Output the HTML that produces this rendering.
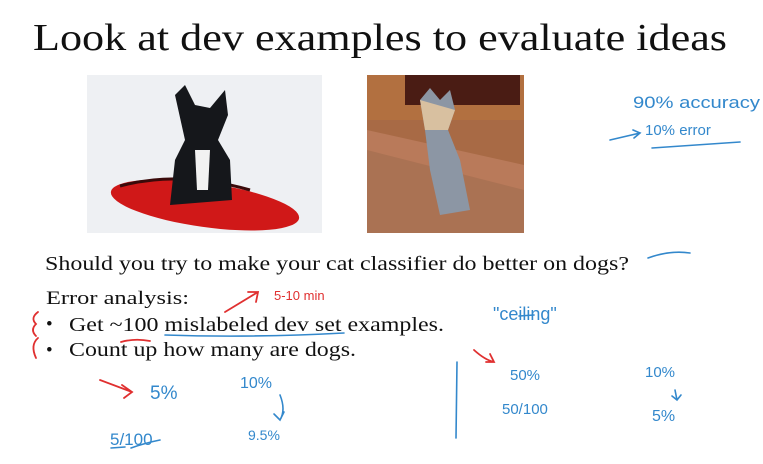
<!DOCTYPE html>
<html><head><meta charset="utf-8"><style>
html,body{margin:0;padding:0;background:#fff;width:763px;height:464px;overflow:hidden}
svg{display:block}
.s{font-family:"Liberation Serif",serif;fill:#111}
.h{font-family:"Liberation Sans",sans-serif;fill:#3388cc}
.r{font-family:"Liberation Sans",sans-serif;fill:#e03030}
</style></head><body>
<svg width="763" height="464" viewBox="0 0 763 464" xmlns="http://www.w3.org/2000/svg">
<text class="s" x="33" y="50" font-size="38" textLength="694" lengthAdjust="spacingAndGlyphs">Look at dev examples to evaluate ideas</text>
<!-- dog 1 -->
<rect x="87" y="75" width="235" height="158" fill="#eef0f3"/>
<ellipse cx="205" cy="205" rx="95" ry="22" fill="#d01818" transform="rotate(8 205 205)"/>
<path d="M120 186 Q180 170 250 190" stroke="#3a0a0a" stroke-width="3" fill="none"/>
<path d="M175 95 L185 85 L195 105 L210 108 L225 90 L228 115 L218 140 L230 160 L232 200 L170 205 L175 160 L185 140 Z" fill="#15171b"/>
<path d="M195 150 L210 150 L208 190 L197 190 Z" fill="#f2f2f2"/>
<!-- dog 2 -->
<rect x="367" y="75" width="157" height="158" fill="#a86a45"/>
<rect x="367" y="75" width="157" height="45" fill="#b27040"/>
<rect x="405" y="75" width="115" height="30" fill="#4a1c14"/>
<path d="M367 130 L524 165 L524 233 L367 233 Z" fill="#b97a5a"/>
<path d="M367 150 L524 190 L524 233 L367 233 Z" fill="#9c6a4c" opacity="0.5"/>
<path d="M420 100 L430 88 L440 100 L450 90 L455 110 L448 130 L460 160 L470 210 L440 215 L430 170 L425 130 Z" fill="#8c96a4"/>
<path d="M420 100 L455 110 L448 130 L425 130 Z" fill="#d8c0a0"/>
<text class="s" x="45" y="270" font-size="19.5" textLength="584" lengthAdjust="spacingAndGlyphs">Should you try to make your cat classifier do better on dogs?</text>
<text class="s" x="46" y="304" font-size="19" textLength="143" lengthAdjust="spacingAndGlyphs">Error analysis:</text>
<text class="s" x="46" y="330" font-size="19">•</text>
<text class="s" x="69" y="331" font-size="19.5" textLength="375" lengthAdjust="spacingAndGlyphs">Get ~100 mislabeled dev set examples.</text>
<text class="s" x="46" y="356" font-size="19">•</text>
<text class="s" x="69" y="356" font-size="19.5" textLength="287" lengthAdjust="spacingAndGlyphs">Count up how many are dogs.</text>
<g stroke="#e03030" stroke-width="1.8" fill="none" stroke-linecap="round">
<path d="M38 312 Q30 318 36 324 Q30 330 36 336"/>
<path d="M38 338 Q30 345 36 358"/>
<path d="M121 342 Q135 338 150 341"/>
<path d="M225 312 L258 292 M248 292 L258 292 L256 302"/>
<path d="M100 380 L132 392 M122 385 L132 392 L124 398"/>
<path d="M474 350 Q485 360 494 362 M486 362 L494 362 L490 354"/>
</g>
<text class="r" x="274" y="300" font-size="13">5-10 min</text>
<g stroke="#3388cc" stroke-width="1.6" fill="none" stroke-linecap="round">
<path d="M165 335 Q250 338 344 333"/>
<path d="M610 140 L640 133 M633 130 L640 133 L634 138"/>
<path d="M652 148 L740 142"/>
<path d="M648 258 Q670 250 690 253"/>
<path d="M519 316 L534 315"/>
<path d="M457 362 L456 438"/>
<path d="M280 395 Q286 410 280 420 M274 414 L280 420 L284 412"/>
<path d="M111 448 L125 447 M131 448 Q145 443 160 440"/>
<path d="M675 390 L677 400 M672 396 L677 400 L681 395"/>
</g>
<text class="h" x="633" y="108" font-size="17" textLength="127" lengthAdjust="spacingAndGlyphs">90%  accuracy</text>
<text class="h" x="645" y="135" font-size="15">10%   error</text>
<text class="h" x="493" y="320" font-size="18">"ceiling"</text>
<text class="h" x="510" y="380" font-size="15">50%</text>
<text class="h" x="502" y="414" font-size="15">50/100</text>
<text class="h" x="645" y="377" font-size="15">10%</text>
<text class="h" x="652" y="421" font-size="16">5%</text>
<text class="h" x="150" y="399" font-size="19">5%</text>
<text class="h" x="240" y="388" font-size="16">10%</text>
<text class="h" x="248" y="440" font-size="14">9.5%</text>
<text class="h" x="110" y="445" font-size="17">5/100</text>
</svg>
</body></html>
